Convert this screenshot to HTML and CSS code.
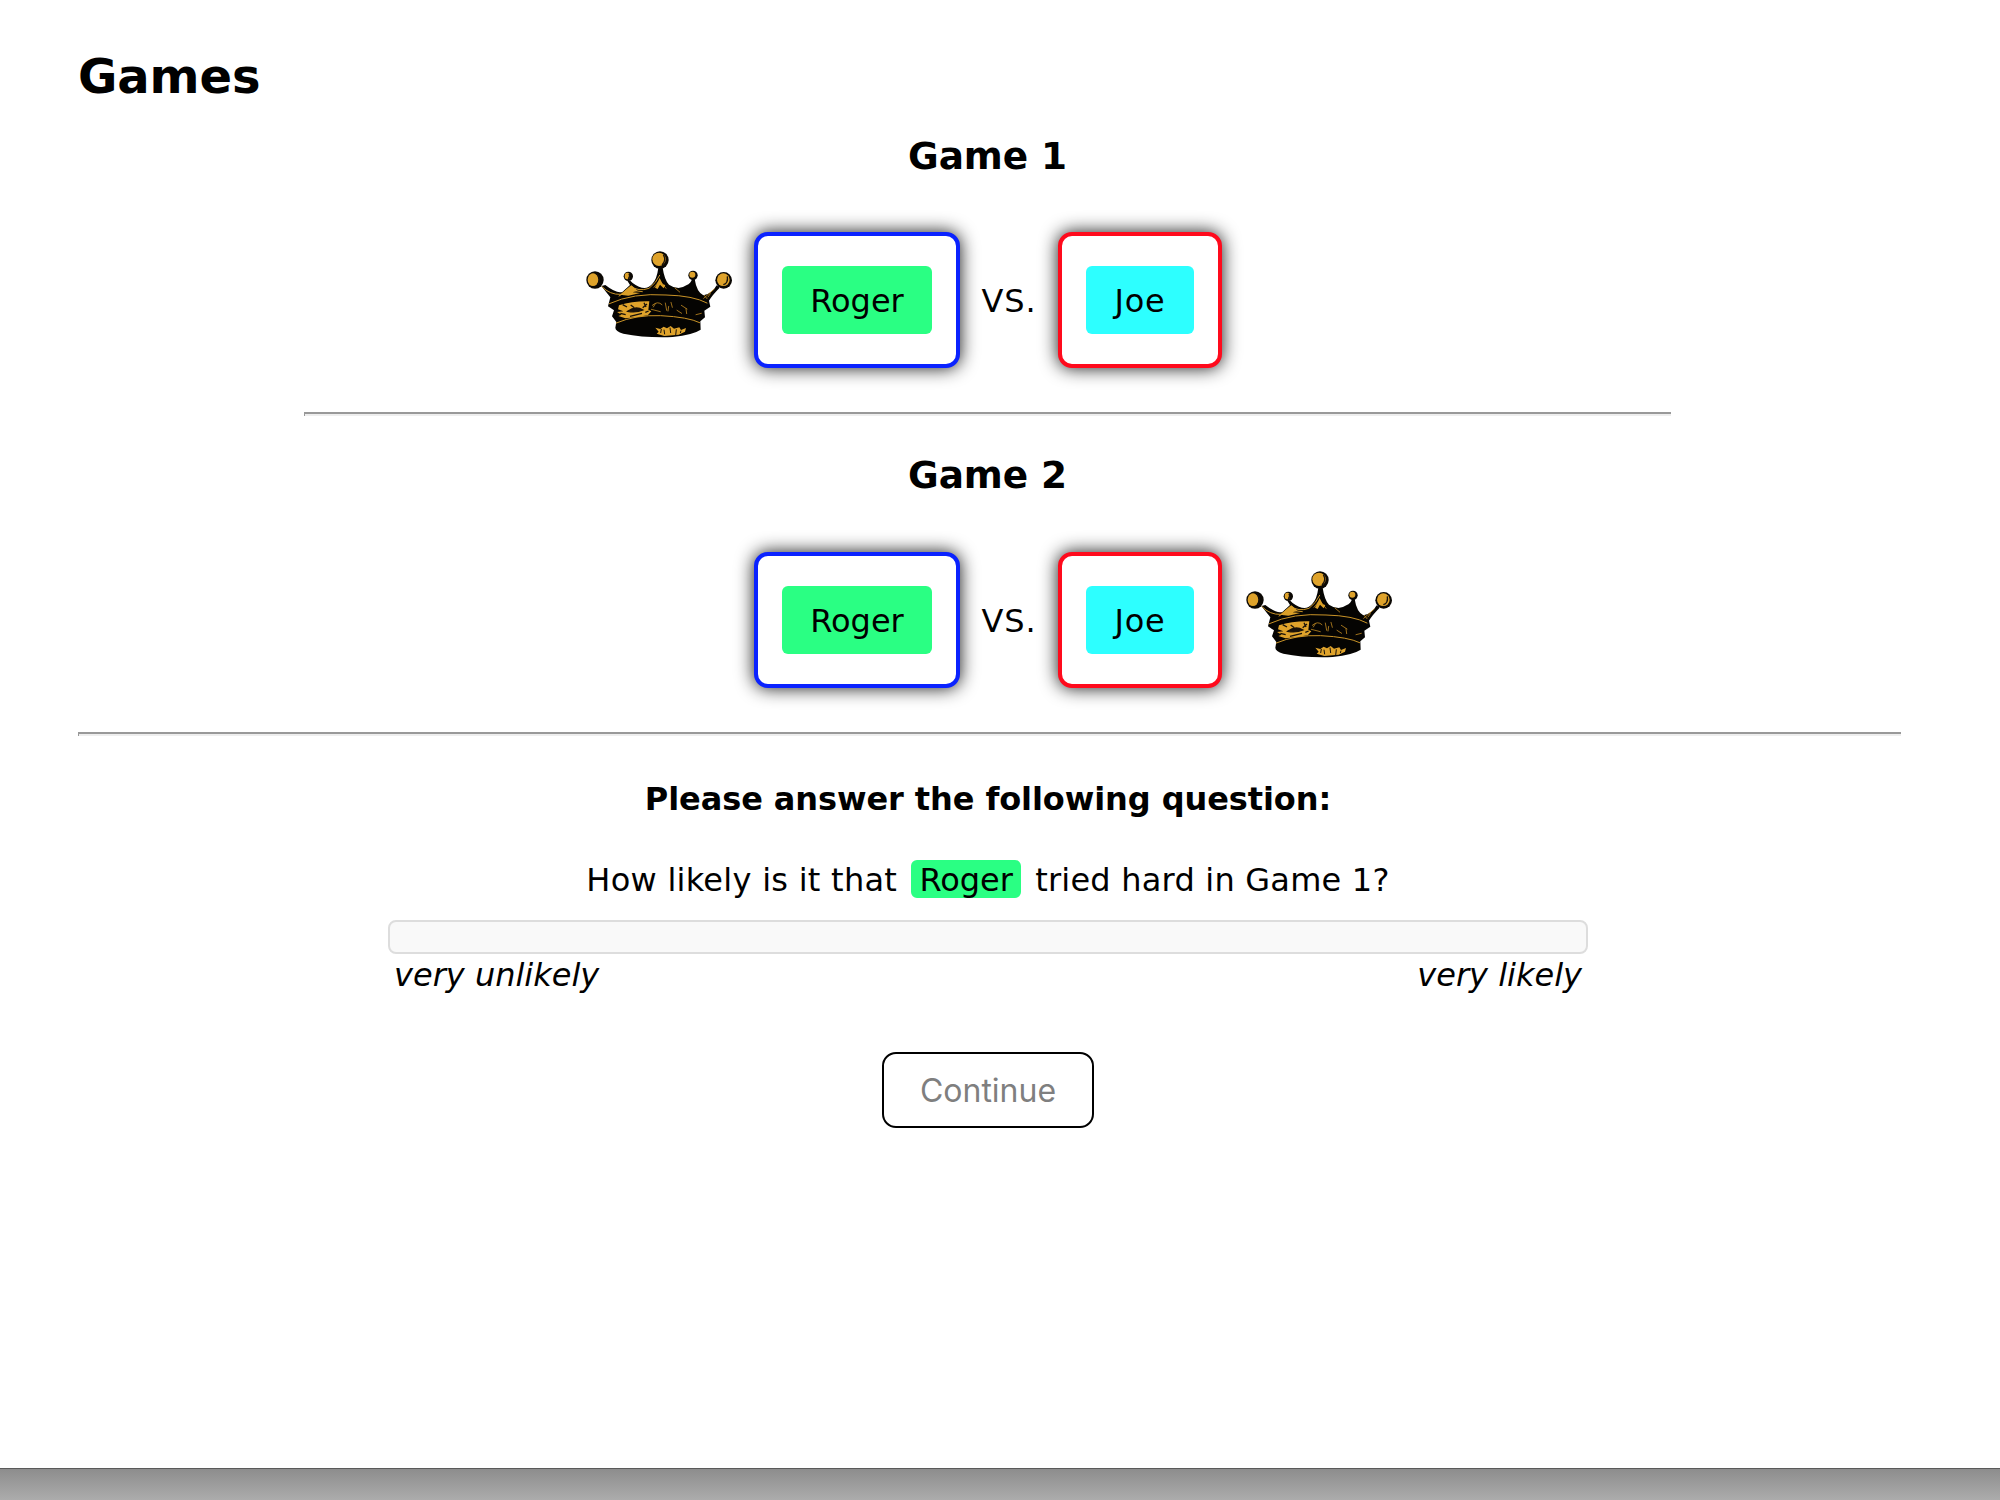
FILE: index.html
```html
<!DOCTYPE html>
<html lang="en">
<head>
<meta charset="utf-8">
<title>Games</title>
<link rel="stylesheet" href="styles.css">
</head>
<body>
<svg class="defs" width="0" height="0">
  <symbol id="crown" viewBox="0 0 540 360">
    <path fill="#050402" d="M94 153 L106 150 Q142 178 158 170 L180 150 L172 137 H181 L188 144 Q225 172 246 148 Q261 132 265 98 L278 98 Q283 134 297 149 Q325 168 349 151 Q363 145 366 132 L374 132 Q380 171 400 181 Q425 178 440 151 L449 158 Q426 181 417 197 L421 215 L403 227 L405 247 L391 259 L392 284 Q370 299 308 306 Q225 309 160 296 Q136 289 136 278 L139 261 L126 244 L132 226 L114 214 L121 187 Z"/>
    <g fill="#0b0804"><circle cx="75" cy="135" r="26"/><circle cx="270" cy="75" r="26"/><circle cx="461" cy="136" r="25"/><circle cx="175" cy="124" r="14"/><circle cx="369" cy="121" r="14"/></g>
    <g fill="#dfa32b"><ellipse cx="69" cy="134" rx="16" ry="19"/><circle cx="267" cy="73" r="20"/><circle cx="460" cy="134" r="19"/><ellipse cx="172" cy="123" rx="8" ry="10"/><circle cx="367" cy="119" r="9"/></g>
    <g fill="none" stroke="#17110a" stroke-width="4"><path d="M80 115 Q96 132 83 150"/><path d="M280 59 Q290 76 276 90"/><path d="M472 124 Q475 145 460 149"/><path d="M177 116 Q182 124 175 132"/></g>
    <g fill="none" stroke="#c99327" stroke-width="3" stroke-linecap="round">
      <path d="M96 155 Q120 180 153 178 L183 153 Q204 171 237 160 Q259 144 269 121"/>
      <path d="M118 206 Q190 173 288 180 Q370 182 411 204"/>
      <path d="M139 264 Q197 239 272 242 Q355 246 389 263"/>
      <path d="M147 183 L177 165 L217 170"/>
    </g>
    <g fill="none" stroke="#b98420" stroke-width="2.5" stroke-linecap="round">
      <path d="M252 157 L269 136 L288 160 M315 159 L329 171"/>
      <path d="M433 162 L401 190 M403 181 L411 191 M421 176 L414 186 M350 236 L348 221 M378 239 L394 235"/>
      <path d="M247 211 Q263 196 276 209 M244 223 L271 230 M286 204 L290 226 M303 202 L307 217 M321 226 L335 235 M334 211 L351 222 M256 206 L250 216 M296 214 L294 228"/>
    </g>
    <path fill="#d99f28" d="M151 179 L184 151 L203 167 L188 172 L211 174 L175 182 Z M255 158 L269 129 L278 148 L286 150 L281 160 L270 149 L263 162 Z"/>
    <path fill="#dfa32b" d="M147 211 Q187 198 238 199 L235 224 L244 229 L234 240 L205 246 L166 250 L145 243 L155 239 L141 231 L160 229 L144 223 Z M256 278 L271 282 L281 275 L291 280 L302 273 L312 281 L328 277 L333 285 L348 279 L345 290 L326 299 L283 303 L260 296 L266 290 Z"/>
    <g fill="none" stroke="#17110a" stroke-width="4">
      <path d="M173 229 Q196 211 219 225 Q198 234 173 229 Z" fill="#17110a"/>
      <path d="M158 209 L171 216 M182 210 L193 218 M231 207 L218 218 M180 244 L216 235 M151 235 L167 239 M222 203 L228 216 M226 232 L236 228"/>
      <path d="M274 282 L272 294 M282 284 L284 298 M300 278 L302 294 M319 283 L317 301 M333 287 L331 294" stroke-width="3"/>
    </g>
  </symbol>
</svg>
<main class="page">
  <h1 class="page-title">Games</h1>
  <div class="games">
    <section class="game">
      <h3 class="game-title">Game 1</h3>
      <div class="match">
        <div class="award"><svg class="crown"><use href="#crown"/></svg></div>
        <div class="team team-blue"><span class="player roger">Roger</span></div>
        <span class="versus">VS.</span>
        <div class="team team-red"><span class="player joe">Joe</span></div>
        <div class="award"></div>
      </div>
    </section>
    <hr class="rule">
    <section class="game game-second">
      <h3 class="game-title">Game 2</h3>
      <div class="match">
        <div class="award"></div>
        <div class="team team-blue"><span class="player roger">Roger</span></div>
        <span class="versus">VS.</span>
        <div class="team team-red"><span class="player joe">Joe</span></div>
        <div class="award award-right"><svg class="crown"><use href="#crown"/></svg></div>
      </div>
    </section>
  </div>
  <hr class="rule rule-wide">
  <section class="question">
    <h4 class="prompt">Please answer the following question:</h4>
    <p class="ask"><span class="ask-start">How likely is it that</span><span class="mention roger">Roger</span><span class="ask-end">tried hard in Game 1?</span></p>
    <div class="slider"></div>
    <div class="scale"><span class="low">very unlikely</span><span class="high">very likely</span></div>
    <button class="continue" disabled>Continue</button>
  </section>
</main>
<footer class="window-edge"></footer>
</body>
</html>
```
FILE: styles.css
```css
* { box-sizing: border-box; }
body {
  margin: 0;
  height: 1500px;
  display: flex;
  flex-direction: column;
  overflow: hidden;
  background: #fff;
  color: #000;
  font: 32px/40px Verdana, "DejaVu Sans", sans-serif;
}
.defs { display: block; position: absolute; }
.page { flex: 1; width: 1823px; margin-left: 78px; padding-top: 48px; }
h1, h3, h4, p { margin: 0; white-space: nowrap; }
.page-title { font-size: 48px; line-height: 56px; letter-spacing: -0.1px; }
.games { width: 1367px; margin: 28px 0 0 226px; }
.game-title { font-size: 37.44px; line-height: 48px; text-align: center; letter-spacing: -0.1px; }
.game { height: 280px; }
.game-second { height: 316px; padding-top: 35px; }
.match {
  display: flex;
  align-items: center;
  width: 840px;
  margin: 52px 0 0 266px;
  height: 136px;
}
.game-second .match { margin-top: 53px; }
.award { width: 184px; height: 120px; flex: none; }
.award-right { padding-left: 8px; width: 188px; }
.crown { display: block; width: 180px; height: 120px; margin-top: -5px; }
.team {
  flex: none;
  height: 136px;
  padding: 30px 24px;
  border: 4px solid #0a22ff;
  border-radius: 14px;
  background: #fff;
  box-shadow: 0 0 18px rgba(0, 0, 0, 0.92);
}
.team-blue { width: 206px; }
.team-red { width: 164px; border-color: #ff0a1c; }
.player {
  display: flex;
  align-items: center;
  justify-content: center;
  height: 68px;
  padding-top: 2px;
  border-radius: 6px;
}
.roger { background: #2aff83; }
.joe { background: #2dffff; letter-spacing: 0.8px; }
.versus { flex: none; width: 98px; padding-top: 2px; text-align: center; letter-spacing: 0.8px; }
.rule {
  height: 4px;
  margin: 0;
  border: 0;
  border-top: 2px solid #999;
  border-left: 1px solid #999;
  background: #eee;
}
.rule-wide { width: 1823px; }
.question {
  display: flex;
  flex-direction: column;
  align-items: center;
  width: 1820px;
  padding-top: 43px;
}
.prompt { font-size: 32px; line-height: 40px; letter-spacing: -0.09px; }
.ask { display: flex; align-items: center; margin-top: 37px; height: 46px; }
.ask-start { padding-top: 2px; letter-spacing: 0.27px; }
.ask-end { padding-top: 2px; letter-spacing: 0.22px; }
.mention {
  display: flex;
  justify-content: center;
  width: 118px;
  height: 46px;
  margin: 0 10px;
  line-height: 40px;
  border: 4px solid #fff;
  border-radius: 10px;
}
.slider {
  width: 1200px;
  height: 34px;
  margin-top: 18px;
  border: 2px solid #ddd;
  border-radius: 8px;
  background: #f9f9f9;
}
.scale {
  display: flex;
  justify-content: space-between;
  width: 1188px;
  padding-top: 1px;
  font-style: italic;
}
.continue {
  width: 212px;
  height: 76px;
  margin-top: 57px;
  padding: 2px 0 0;
  border: 2px solid #000;
  border-radius: 14px;
  background: #fff;
  color: #7f7f7f;
  font: 32px/40px Inter, sans-serif;
}
.window-edge {
  height: 32px;
  border-top: 1px solid #5a5a5a;
  background: linear-gradient(#8d8d8d, #acacac);
}
```
